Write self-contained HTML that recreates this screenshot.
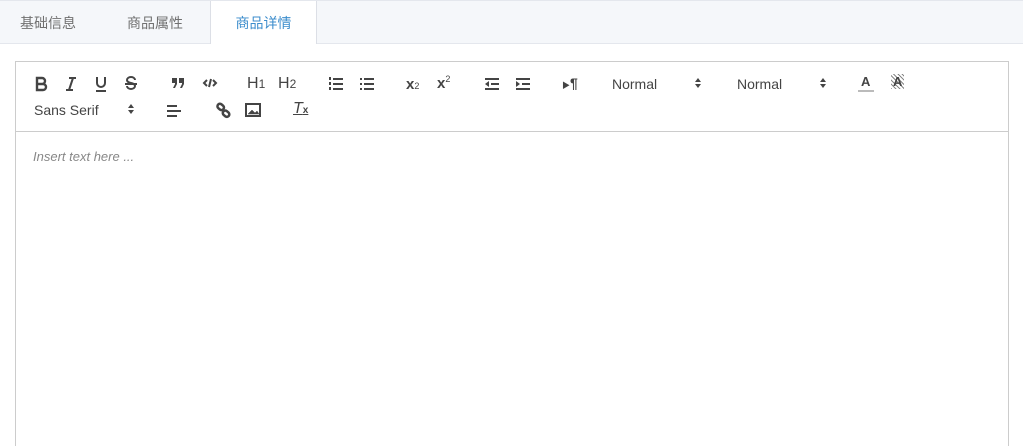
<!DOCTYPE html>
<html style="height:446px;overflow:hidden"><head><meta charset="utf-8"><style>
body{margin:0;width:1023px;height:446px;overflow:hidden;background:#fff;font-family:"Liberation Sans","Noto Sans CJK SC",sans-serif;position:relative}
.tabs{position:absolute;left:0;top:0;width:1023px;height:44px;background:#f5f7fa;border-top:1px solid #e4e7ed;border-bottom:1px solid #e4e7ed;box-sizing:border-box}
.tab{position:absolute;top:0;height:42px;line-height:44px;font-size:14px;color:#707070}
.act{left:210px;width:107px;background:#fff;height:43px;border-left:1px solid #dcdfe6;border-right:1px solid #dcdfe6;color:#3c8dcc;text-align:center;box-sizing:border-box}
.ed{position:absolute;left:15px;top:61px;width:994px;height:400px;border:1px solid #ccc;box-sizing:border-box}
.tb{position:absolute;left:0;top:0;width:100%;height:69px;border-bottom:1px solid #ccc}
.i{position:absolute;color:#444;font-size:14px}
svg{position:absolute}
.sel{position:absolute;font-size:14px;color:#444}
.arr{position:absolute;width:0;height:0;border-left:3px solid transparent;border-right:3px solid transparent}
.ph{position:absolute;left:17px;top:87px;font-size:13px;font-style:italic;color:#888}
</style></head><body>
<div class="tabs">
<div class="tab" style="left:20px">基础信息</div>
<div class="tab" style="left:127px">商品属性</div>
<div class="tab act">商品详情</div>
</div>
<div class="ed"><div class="tb">
<svg style="left:17px;top:14px" width="16" height="16" viewBox="0 0 16 16" fill="none" stroke="#444" stroke-width="2.4"><path d="M4 2h5a3 3 0 0 1 0 6H4zM4 8h6a3 3 0 0 1 0 6H4z"/></svg>
<svg style="left:47px;top:14px" width="16" height="16" viewBox="0 0 16 16" fill="none" stroke="#444" stroke-width="2"><path d="M6 2h7M3 14h7M10 2L6 14"/></svg>
<svg style="left:77px;top:13px" width="16" height="17" viewBox="0 0 16 17" fill="none" stroke="#444" stroke-width="2"><path d="M4 2v6a4 4 0 0 0 8 0V2M3 16h10"/></svg>
<svg style="left:107px;top:14px" width="16" height="16" viewBox="0 0 16 16" fill="none" stroke="#444" stroke-width="2"><path d="M12 4a4 3 0 0 0-8 0c0 4 8 2 8 6a4 3 0 0 1-8 0M2 8h12"/></svg>
<svg style="left:156px;top:16px" width="14" height="10" viewBox="0 0 14 10" fill="#444"><rect x="0" y="0" width="5" height="5"/><rect x="7" y="0" width="5" height="5"/><path d="M3 4h2v2l-2 4H1l2-4zM10 4h2v2l-2 4H8l2-4z"/></svg>
<svg style="left:186px;top:15px" width="16" height="12" viewBox="0 0 16 12" fill="none" stroke="#444" stroke-width="2"><path d="M5 3L2 6l3 3M11 3l3 3-3 3M9 2L7 10"/></svg>
<div class="i" style="left:231px;top:13px;font-size:16px">H<span style="font-size:12px">1</span></div>
<div class="i" style="left:262px;top:13px;font-size:16px">H<span style="font-size:12px">2</span></div>
<svg style="left:312px;top:14px" width="16" height="16" viewBox="0 0 16 16" fill="#444"><rect x="5" y="2" width="10" height="2"/><rect x="5" y="7" width="10" height="2"/><rect x="5" y="12" width="10" height="2"/><rect x="1" y="1" width="2" height="3"/><rect x="1" y="6" width="2" height="3"/><rect x="1" y="11" width="2" height="3"/></svg>
<svg style="left:343px;top:14px" width="16" height="16" viewBox="0 0 16 16" fill="#444"><rect x="5" y="2" width="10" height="2"/><rect x="5" y="7" width="10" height="2"/><rect x="5" y="12" width="10" height="2"/><rect x="1" y="2" width="2" height="2"/><rect x="1" y="7" width="2" height="2"/><rect x="1" y="12" width="2" height="2"/></svg>
<div class="i" style="left:390px;top:14px;font-weight:bold;font-size:15px">x<span style="font-size:9px;font-weight:normal">2</span></div>
<div class="i" style="left:421px;top:12px;font-weight:bold;font-size:15px">x<sup style="font-size:9px;font-weight:normal">2</sup></div>
<svg style="left:468px;top:14px" width="16" height="16" viewBox="0 0 16 16" fill="#444"><rect x="1" y="2" width="14" height="2"/><rect x="7" y="7" width="8" height="2"/><rect x="1" y="12" width="14" height="2"/><path d="M5 5v6L1 8z"/></svg>
<svg style="left:499px;top:14px" width="16" height="16" viewBox="0 0 16 16" fill="#444"><rect x="1" y="2" width="14" height="2"/><rect x="7" y="7" width="8" height="2"/><rect x="1" y="12" width="14" height="2"/><path d="M1 5v6l4-3z"/></svg>
<div class="i" style="left:546px;top:13px;font-weight:bold;font-size:14px"><span style="font-size:8px">▶</span>¶</div>
<div class="sel" style="left:596px;top:14px">Normal</div>
<div class="arr" style="left:679px;top:16px;border-bottom:4px solid #444"></div><div class="arr" style="left:679px;top:22px;border-top:4px solid #444"></div>
<div class="sel" style="left:721px;top:14px">Normal</div>
<div class="arr" style="left:804px;top:16px;border-bottom:4px solid #444"></div><div class="arr" style="left:804px;top:22px;border-top:4px solid #444"></div>
<div class="i" style="left:845px;top:12px;font-weight:bold;font-size:13px">A</div><div style="position:absolute;left:842px;top:28px;width:16px;height:2px;background:#bbb"></div>
<div class="i" style="left:875px;top:12px;font-weight:bold;font-size:13px;background:repeating-linear-gradient(45deg,#888 0 1px,#fff 1px 3px);padding:0 2px">A</div>
<div class="sel" style="left:18px;top:40px">Sans Serif</div>
<div class="arr" style="left:112px;top:42px;border-bottom:4px solid #444"></div><div class="arr" style="left:112px;top:48px;border-top:4px solid #444"></div>
<svg style="left:150px;top:41px" width="16" height="16" viewBox="0 0 16 16" fill="#444"><rect x="1" y="2" width="10" height="2"/><rect x="1" y="7" width="14" height="2"/><rect x="1" y="12" width="10" height="2"/></svg>
<svg style="left:199px;top:40px" width="17" height="17" viewBox="0 0 17 17" fill="none" stroke="#444" stroke-width="2.5"><rect x="2" y="2" width="7" height="5" rx="2.5" transform="rotate(40 5 5)"/><rect x="8" y="9" width="7" height="5" rx="2.5" transform="rotate(40 11 11)"/></svg>
<svg style="left:229px;top:41px" width="16" height="14" viewBox="0 0 16 14" fill="none" stroke="#444" stroke-width="2"><rect x="1" y="1" width="14" height="12"/><path d="M3 11l4-4 3 3 2-2 2 3z" fill="#444" stroke-width="0.5"/></svg>
<div class="i" style="left:277px;top:38px;font-style:italic;font-size:16px;text-decoration:underline">T<span style="font-size:10px;font-style:normal;font-weight:bold;text-decoration:none">x</span></div>
</div>
<div class="ph">Insert text here ...</div>
</div>
</body></html>
